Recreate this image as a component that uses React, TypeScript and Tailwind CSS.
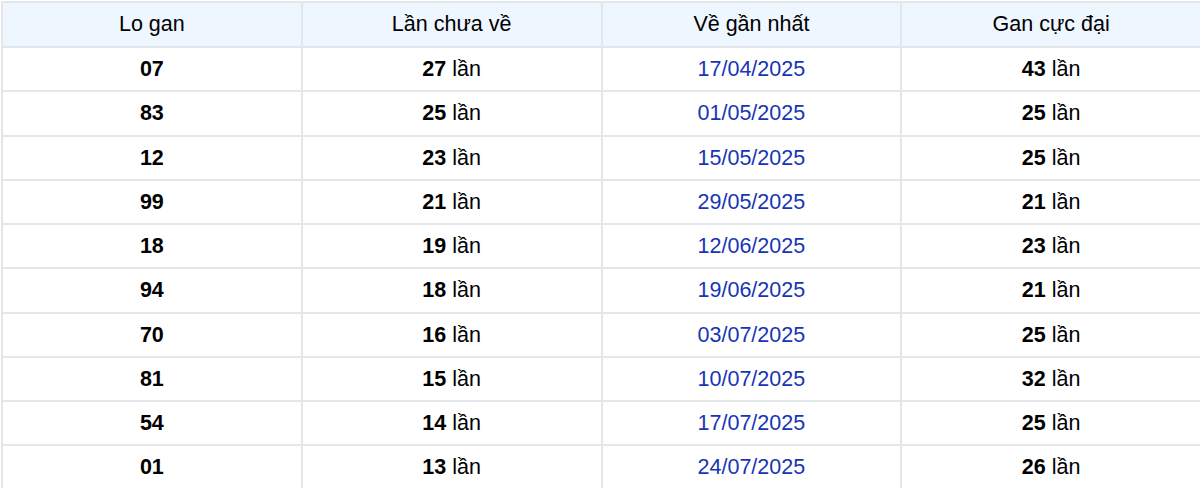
import React from "react";

const rows = [
  ["07", "27", "17/04/2025", "43"],
  ["83", "25", "01/05/2025", "25"],
  ["12", "23", "15/05/2025", "25"],
  ["99", "21", "29/05/2025", "21"],
  ["18", "19", "12/06/2025", "23"],
  ["94", "18", "19/06/2025", "21"],
  ["70", "16", "03/07/2025", "25"],
  ["81", "15", "10/07/2025", "32"],
  ["54", "14", "17/07/2025", "25"],
  ["01", "13", "24/07/2025", "26"],
];

export default function App() {
  return (
    <div className="bg-white pt-px pl-px" style={{ fontFamily: '"Liberation Sans", Arial, sans-serif' }}>
      <table className="w-[1201px] border-collapse table-fixed text-[21.5px] text-black">
        <thead>
          <tr className="bg-[#eef6ff]">
            {["Lo gan", "Lần chưa về", "Về gần nhất", "Gan cực đại"].map((h) => (
              <th key={h} className="border-2 border-[#e3e6ea] h-[45px] font-normal text-center">
                {h}
              </th>
            ))}
          </tr>
        </thead>
        <tbody>
          {rows.map((r) => (
            <tr key={r[0]}>
              <td className="border-2 border-[#e3e6ea] h-[44.25px] text-center font-bold">{r[0]}</td>
              <td className="border-2 border-[#e3e6ea] h-[44.25px] text-center">
                <b>{r[1]}</b> lần
              </td>
              <td className="border-2 border-[#e3e6ea] h-[44.25px] text-center text-[#1735b5]">{r[2]}</td>
              <td className="border-2 border-[#e3e6ea] h-[44.25px] text-center">
                <b>{r[3]}</b> lần
              </td>
            </tr>
          ))}
        </tbody>
      </table>
    </div>
  );
}
